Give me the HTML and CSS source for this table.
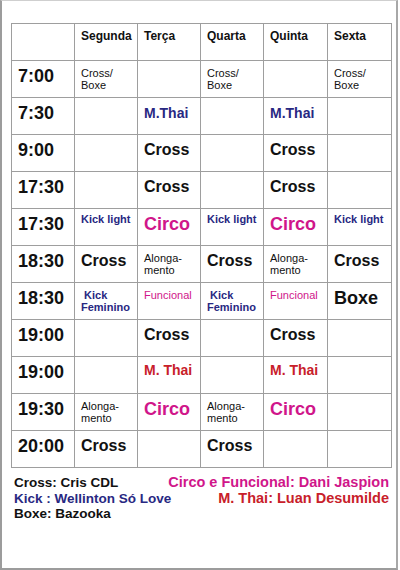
FILE: index.html
```html
<!DOCTYPE html>
<html lang="pt">
<head>
<meta charset="utf-8">
<title>Horários</title>
<link rel="stylesheet" href="styles.css">
</head>
<body>
<div class="page">
  <table class="grid">
    <colgroup>
      <col class="c63"><col class="c63"><col class="c63"><col class="c63"><col class="c64"><col class="c64">
    </colgroup>
    <tr class="head">
      <td></td><td>Segunda</td><td>Terça</td><td>Quarta</td><td>Quinta</td><td>Sexta</td>
    </tr>
    <tr>
      <td class="t">7:00</td>
      <td><div class="sm">Cross/<br>Boxe</div></td>
      <td></td>
      <td><div class="sm">Cross/<br>Boxe</div></td>
      <td></td>
      <td><div class="sm">Cross/<br>Boxe</div></td>
    </tr>
    <tr>
      <td class="t">7:30</td>
      <td></td>
      <td class="mt navy">M.Thai</td>
      <td></td>
      <td class="mt navy">M.Thai</td>
      <td></td>
    </tr>
    <tr>
      <td class="t">9:00</td>
      <td></td>
      <td class="big">Cross</td>
      <td></td>
      <td class="big">Cross</td>
      <td></td>
    </tr>
    <tr>
      <td class="t">17:30</td>
      <td></td>
      <td class="big">Cross</td>
      <td></td>
      <td class="big">Cross</td>
      <td></td>
    </tr>
    <tr>
      <td class="t">17:30</td>
      <td><div class="kl">Kick light</div></td>
      <td class="circo">Circo</td>
      <td><div class="kl">Kick light</div></td>
      <td class="circo">Circo</td>
      <td><div class="kl">Kick light</div></td>
    </tr>
    <tr>
      <td class="t">18:30</td>
      <td class="big">Cross</td>
      <td><div class="sm">Alonga-<br>mento</div></td>
      <td class="big">Cross</td>
      <td><div class="sm">Alonga-<br>mento</div></td>
      <td class="big">Cross</td>
    </tr>
    <tr>
      <td class="t">18:30</td>
      <td><div class="kf">&nbsp;Kick<br>Feminino</div></td>
      <td><div class="fn">Funcional</div></td>
      <td><div class="kf">&nbsp;Kick<br>Feminino</div></td>
      <td><div class="fn">Funcional</div></td>
      <td class="boxe">Boxe</td>
    </tr>
    <tr>
      <td class="t">19:00</td>
      <td></td>
      <td class="big">Cross</td>
      <td></td>
      <td class="big">Cross</td>
      <td></td>
    </tr>
    <tr>
      <td class="t">19:00</td>
      <td></td>
      <td class="mt red"><div class="up">M. Thai</div></td>
      <td></td>
      <td class="mt red"><div class="up">M. Thai</div></td>
      <td></td>
    </tr>
    <tr>
      <td class="t">19:30</td>
      <td><div class="sm">Alonga-<br>mento</div></td>
      <td class="circo">Circo</td>
      <td><div class="sm">Alonga-<br>mento</div></td>
      <td class="circo">Circo</td>
      <td></td>
    </tr>
    <tr>
      <td class="t">20:00</td>
      <td class="big">Cross</td>
      <td></td>
      <td class="big">Cross</td>
      <td></td>
      <td></td>
    </tr>
  </table>
  <div class="footer">
    <div class="left">
      <div>Cross: Cris CDL</div>
      <div class="navy">Kick : Wellinton Só Love</div>
      <div>Boxe: Bazooka</div>
    </div>
    <div class="right">
      <div class="magenta">Circo e Funcional: Dani Jaspion</div>
      <div class="red">M. Thai: Luan Desumilde</div>
    </div>
  </div>
</div>
</body>
</html>
```

FILE: styles.css
```css
html, body {
  margin: 0;
  padding: 0;
  background: #ffffff;
}

body {
  font-family: "Liberation Sans", Arial, sans-serif;
  color: #111111;
}

.page {
  box-sizing: border-box;
  width: 398px;
  height: 570px;
  border: 2px solid #9c9c9c;
  border-top: 1px solid #cfcfcf;
  border-right-color: #a8a8a8;
  padding: 22px 0 0 9px;
}

.grid {
  border-collapse: collapse;
  table-layout: fixed;
  width: 381px;
}

.c63 { width: 63px; }
.c64 { width: 64px; }

.grid td {
  border: 1px solid #9e9e9e;
  height: 37px;
  box-sizing: border-box;
  padding: 0 3px 5px 6px;
  vertical-align: middle;
  text-align: left;
  white-space: nowrap;
  line-height: 1.15;
}

.grid .head td {
  font-size: 12px;
  font-weight: bold;
  padding-bottom: 11px;
}

.grid td.t {
  font-size: 18px;
  font-weight: bold;
}

.grid td.big {
  font-size: 16px;
  font-weight: bold;
}

.grid td.circo {
  font-size: 18px;
  font-weight: bold;
  color: #d0168a;
}

.grid td.boxe {
  font-size: 18px;
  font-weight: bold;
}

.grid td.mt {
  font-size: 14px;
  font-weight: bold;
}

.up {
  margin-bottom: 5px;
}

.sm {
  font-size: 11px;
  line-height: 12px;
  margin-bottom: -5px;
}

.kl {
  font-size: 11px;
  font-weight: bold;
  color: #282882;
  margin-bottom: 10px;
}

.kf {
  font-size: 11px;
  font-weight: bold;
  line-height: 12px;
  color: #282882;
  margin-bottom: -4px;
}

.fn {
  font-size: 11px;
  color: #d0168a;
  margin-bottom: 7px;
}

.navy { color: #282882; }
.red { color: #c8202a; }
.magenta { color: #d0168a; }

.footer {
  display: flex;
  justify-content: space-between;
  width: 381px;
  margin-top: 6px;
  font-weight: bold;
  white-space: nowrap;
}

.left {
  flex: none;
  width: 140px;
  padding-left: 3px;
  font-size: 13.5px;
  line-height: 15.5px;
  padding-top: 1px;
}

.right {
  flex: none;
  text-align: right;
  font-size: 14.5px;
  line-height: 16px;
  padding-right: 3px;
}
```
